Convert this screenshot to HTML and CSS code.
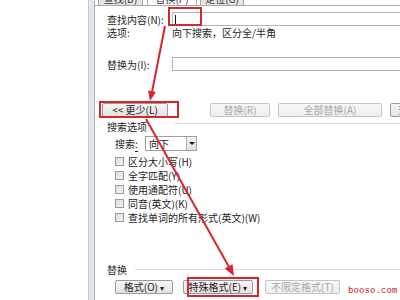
FILE: index.html
```html
<!DOCTYPE html>
<html>
<head>
<meta charset="utf-8">
<link rel="stylesheet" href="styles.css">
</head>
<body>
<div class="page">
  <div class="gutter"></div>
  <div class="frame"></div>
  <div class="dialog">
    <div class="tabs">
      <div class="tab t1">查找(D)</div>
      <div class="tab t2 active">替换(P)</div>
      <div class="tab t3">定位(G)</div>
    </div>
    <div class="panel">
      <div class="row find">
        <span class="label">查找内容(N):</span>
        <div class="input"><span class="caret"></span></div>
      </div>
      <div class="row opts">
        <span class="label">选项:</span>
        <span class="value">向下搜索，区分全/半角</span>
      </div>
      <div class="row repl">
        <span class="label">替换为(I):</span>
        <div class="input"></div>
      </div>
      <div class="btnrow">
        <button class="btn less">&lt;&lt; 更少(L)</button>
        <button class="btn dis b-rep">替换(R)</button>
        <button class="btn dis b-all">全部替换(A)</button>
        <button class="btn b-next">查找下一处(F)</button>
      </div>
      <div class="group g1"><span>搜索选项</span><i class="gline"></i></div>
      <div class="searchrow">
        <span class="slabel">搜索<u>:</u></span>
        <div class="select"><span class="sval">向下</span><span class="sarrow"></span></div>
      </div>
      <div class="checks">
        <label class="chk"><span class="box"></span>区分大小写(H)</label>
        <label class="chk"><span class="box"></span>全字匹配(Y)</label>
        <label class="chk"><span class="box"></span>使用通配符(U)</label>
        <label class="chk"><span class="box"></span>同音(英文)(K)</label>
        <label class="chk"><span class="box"></span>查找单词的所有形式(英文)(W)</label>
      </div>
      <div class="group g2"><span>替换</span><i class="gline"></i></div>
      <div class="btnrow2">
        <button class="btn fmt">格式(O) <b class="dd">▾</b></button>
        <button class="btn spec">特殊格式(E) <b class="dd">▾</b></button>
        <button class="btn dis nof">不限定格式(T)</button>
        <span class="wm">booso.com</span>
      </div>
    </div>
  </div>

  <div class="mark m1"></div>
  <div class="mark m2"></div>
  <div class="mark m3"></div>
  <svg class="arrows" width="400" height="300" viewBox="0 0 400 300">
    <line x1="165" y1="26" x2="152" y2="92" stroke="#d8262d" stroke-width="2"/>
    <polygon points="150,101 155.9,92 148,90.4" fill="#d8262d"/>
    <line x1="146" y1="119" x2="229" y2="267" stroke="#d8262d" stroke-width="2"/>
    <polygon points="234,276 232.5,264.2 224.7,268.6" fill="#d8262d"/>
  </svg>
</div>
</body>
</html>
```

FILE: styles.css
```css
html, body {
  margin: 0;
  padding: 0;
  background: #fff;
}
body {
  width: 400px;
  height: 300px;
  overflow: hidden;
  font-family: "Noto Sans CJK SC", "Noto Sans", sans-serif;
  font-size: 10px;
  color: #222;
}
.page {
  position: relative;
  display: flex;
  width: 400px;
  height: 300px;
}
.gutter {
  width: 88px;
  flex: none;
}
.frame {
  width: 5px;
  flex: none;
  background: #e3e8ee;
  border-left: 1px solid #c2cad4;
}
.dialog {
  flex: 1;
  display: flex;
  flex-direction: column;
  border-left: 1px solid #aab0b8;
  background: #fff;
  min-width: 0;
}
.tabs {
  display: flex;
  align-items: flex-end;
  height: 5px;
  overflow: hidden;
  border-bottom: 1px solid #a8a8a8;
  padding-left: 3px;
}
.tab {
  flex: none;
  height: 14px;
  line-height: 13px;
  text-align: center;
  border: 1px solid #a8a8a8;
  border-bottom: none;
  box-sizing: border-box;
  color: #333;
}
.t1 { width: 45px; background: #e6e6e6; }
.t2 { width: 50px; margin-left: 4px; background: #fff; }
.t3 { width: 44px; margin-left: 3px; background: #e6e6e6; }

.panel {
  display: flex;
  flex-direction: column;
  padding-left: 12px;
}
.row {
  display: flex;
  align-items: center;
}
.label {
  width: 65px;
  flex: none;
  white-space: nowrap;
}
.find { margin-top: 6px; height: 14px; }
.opts { height: 13px; }
.repl { margin-top: 18px; height: 14px; }
.input {
  flex: 1;
  height: 14px;
  box-sizing: border-box;
  border: 1px solid #b4b4b4;
  border-right: none;
  background: #fff;
  display: flex;
  align-items: center;
  padding-left: 2px;
}
.caret {
  width: 1px;
  height: 9px;
  background: #111;
}

.btn {
  font-family: "Noto Sans CJK SC", "Noto Sans", sans-serif;
  font-size: 10px;
  height: 14px;
  padding: 0;
  line-height: 12px;
  box-sizing: border-box;
  border: 1px solid #9a9a9a;
  border-radius: 2px;
  background: linear-gradient(#f6f6f6, #e2e2e2);
  color: #222;
  flex: none;
  white-space: nowrap;
  overflow: hidden;
}
.btn.dis {
  color: #a6a6a6;
  border-color: #c4c4c4;
  background: linear-gradient(#f8f8f8, #eeeeee);
}
.btnrow {
  display: flex;
  align-items: center;
  height: 16px;
  margin-top: 31px;
  margin-left: -5px;
}
.less { width: 66px; }
.b-rep { width: 60px; margin-left: 42px; }
.b-all { width: 104px; margin-left: 8px; }
.b-next { width: 80px; margin-left: 8px; }

.group {
  display: flex;
  align-items: center;
  height: 12px;
  white-space: nowrap;
}
.g1 { margin-top: 2px; }
.g1 .gline { margin-left: 28px; margin-top: -5px; }
.gline {
  flex: 1;
  height: 1px;
  background: #dcdcdc;
}
.g2 { margin-top: 39px; }
.g2 .gline { margin-left: 8px; }

.searchrow {
  display: flex;
  align-items: center;
  height: 16px;
  margin-top: 3px;
  padding-left: 8px;
}
.slabel {
  width: 30px;
  flex: none;
}
.slabel u { text-decoration: none; border-bottom: 1px solid #222; }
.select {
  width: 52px;
  height: 15px;
  box-sizing: border-box;
  border: 1px solid #a0a0a0;
  display: flex;
  align-items: center;
}
.sval { flex: 1; padding-left: 3px; }
.sarrow {
  width: 9px;
  height: 13px;
  border-left: 1px solid #b0b0b0;
  background: linear-gradient(#f4f4f4, #e0e0e0);
  position: relative;
}
.sarrow::after {
  content: "";
  position: absolute;
  left: 2px;
  top: 5px;
  border-left: 3px solid transparent;
  border-right: 3px solid transparent;
  border-top: 3px solid #111;
}

.checks {
  display: flex;
  flex-direction: column;
  margin-top: 3px;
  padding-left: 8px;
}
.chk {
  display: flex;
  align-items: center;
  height: 14px;
  white-space: nowrap;
}
.box {
  width: 9px;
  height: 9px;
  box-sizing: border-box;
  border: 1px solid #9c9c9c;
  background: linear-gradient(135deg, #dcdcdc, #f4f4f4);
  margin-right: 4px;
  flex: none;
}

.btnrow2 {
  display: flex;
  align-items: center;
  height: 15px;
  margin-top: 4px;
  padding-left: 8px;
}
.fmt { width: 58px; }
.spec { width: 70px; margin-left: 10px; }
.nof { width: 75px; margin-left: 12px; }
.dd { font-weight: normal; font-size: 8px; }
.wm {
  margin-left: 8px;
  margin-top: 8px;
  font-family: "Liberation Mono", monospace;
  font-size: 9px;
  letter-spacing: 0.1px;
  color: #c8101a;
  white-space: nowrap;
}

.mark {
  position: absolute;
  border: 2px solid #d8262d;
  box-sizing: border-box;
}
.m1 { left: 168px; top: 7px; width: 34px; height: 19px; }
.m2 { left: 99px; top: 101px; width: 80px; height: 17px; }
.m3 { left: 187px; top: 277px; width: 72px; height: 20px; }
.arrows {
  position: absolute;
  left: 0;
  top: 0;
}
```
